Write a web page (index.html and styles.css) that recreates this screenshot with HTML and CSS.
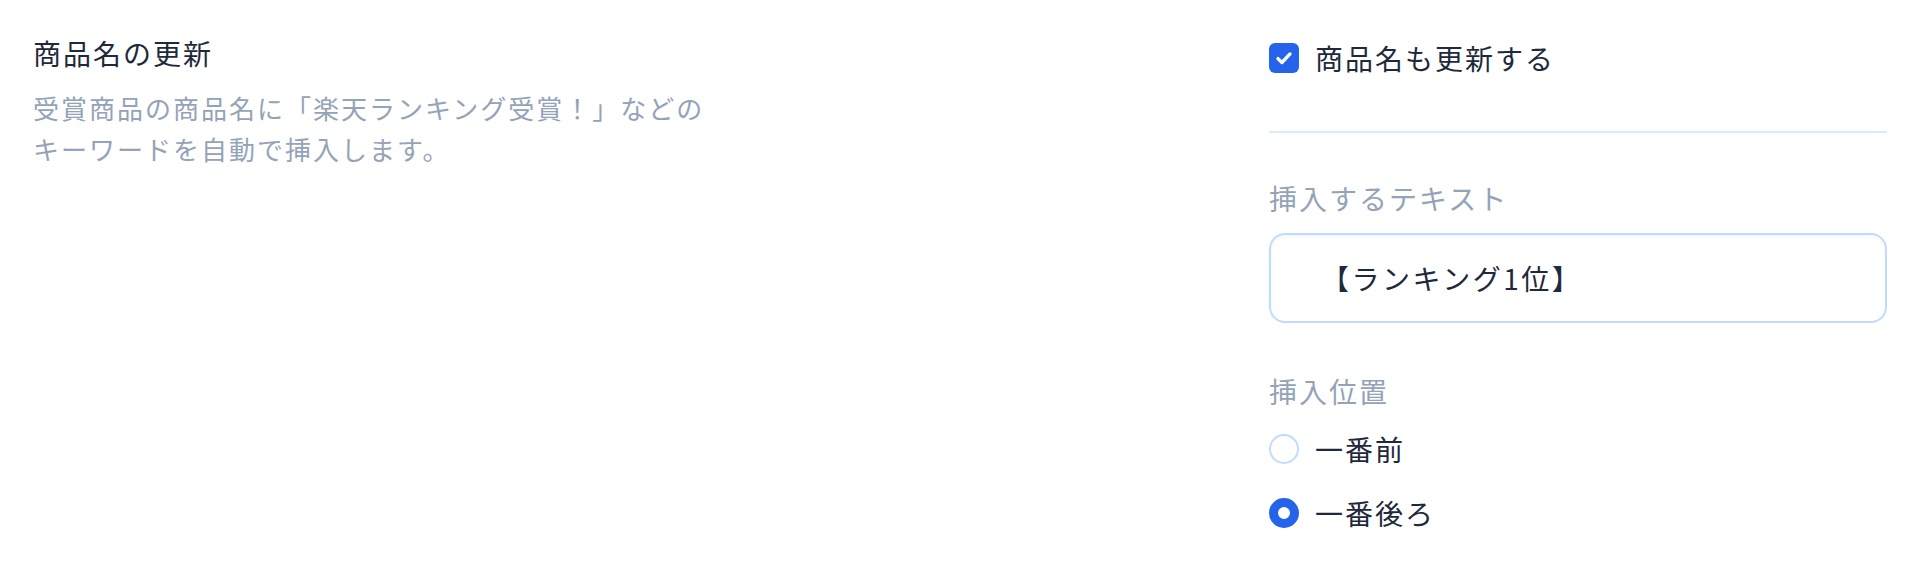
FILE: index.html
```html
<!DOCTYPE html>
<html>
	<head>
		<meta charset="UTF-8">
		<title>商品名の更新</title>
		<link rel="stylesheet" href="styles.css">
	</head>
	<body>
		<div class="setting">
			<div class="setting_info">
				<h2 class="setting_title">商品名の更新</h2>
				<p class="setting_desc">受賞商品の商品名に「楽天ランキング受賞！」などのキーワードを自動で挿入します。</p>
			</div>

			<div class="setting_form">
				<label class="check_row">
					<span class="check_box">
						<svg width="22" height="22" viewBox="0 0 20 20"><path d="M4.5 10.5l3.6 3.6L15.5 6.3" fill="none" stroke="#fff" stroke-width="3" stroke-linecap="round" stroke-linejoin="round"/></svg>
					</span>
					<span>商品名も更新する</span>
				</label>

				<div class="line"></div>

				<div class="field_label">挿入するテキスト</div>
				<input class="text_input" type="text" value="【ランキング1位】">

				<div class="field_label field_label2">挿入位置</div>
				<label class="radio_row">
					<span class="radio"></span>
					<span>一番前</span>
				</label>
				<label class="radio_row">
					<span class="radio radio_on"></span>
					<span>一番後ろ</span>
				</label>
			</div>
		</div>
	</body>
</html>
```

FILE: styles.css
```css
*{padding: 0;margin: 0;box-sizing: border-box;}

body{background: #fff;font-family: "Noto Sans CJK JP", "Noto Sans", sans-serif;color: #1e293b;}

.setting{display: grid;grid-template-columns: 1fr 618px;padding: 33px 35px 0 33px;}

.setting_title{font-size: 28px;font-weight: normal;line-height: 40px;letter-spacing: 2px;}
.setting_desc{max-width: 686px;margin-top: 14px;font-size: 26px;line-height: 41px;color: #94a3b8;letter-spacing: 2px;}

.check_row{display: flex;align-items: center;gap: 16px;margin-top: 5px;height: 40px;font-size: 28px;letter-spacing: 2px;}
.check_box{width: 30px;height: 30px;border-radius: 6px;background: #2563eb;display: flex;align-items: center;justify-content: center;}

.line{height: 2px;background: #dbeafe;margin-top: 53px;}

.field_label{margin-top: 45px;font-size: 28px;line-height: 40px;color: #94a3b8;letter-spacing: 2px;}
.field_label2{margin-top: 48px;}

.text_input{display: block;width: 100%;height: 90px;margin-top: 15px;padding: 0 0 0 50px;border: 2px solid #bfdbfe;border-radius: 16px;box-shadow: inset 0 2px 4px rgba(0,0,0,0.04);font-family: inherit;font-size: 28px;color: #1e293b;letter-spacing: 2.5px;outline: none;}

.radio_row{display: flex;align-items: center;gap: 16px;height: 40px;margin-top: 18px;font-size: 28px;letter-spacing: 2px;}
.radio_row + .radio_row{margin-top: 24px;}
.radio{width: 30px;height: 30px;border-radius: 50%;border: 2px solid #bfdbfe;background: #fff;}
.radio_on{border: 9px solid #2563eb;}
```
